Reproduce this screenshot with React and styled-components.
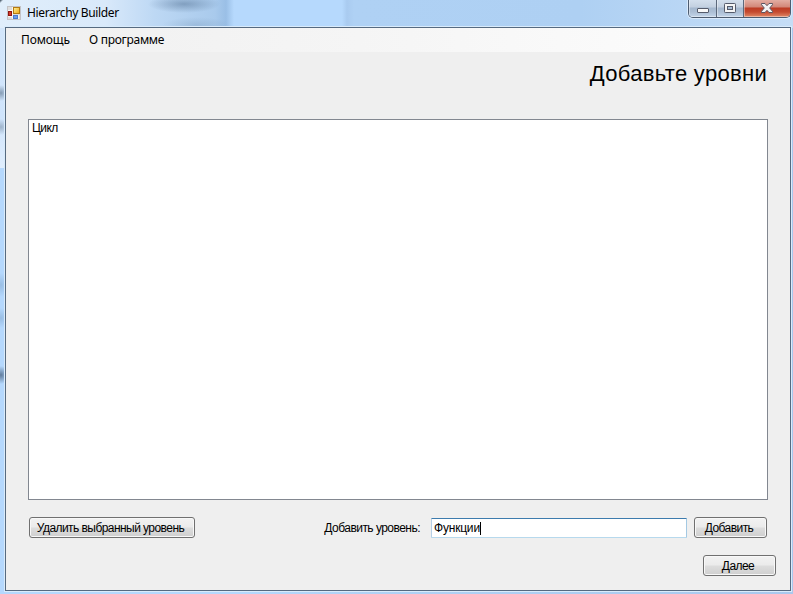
import React from "react";
import styled, { createGlobalStyle } from "styled-components";

const GlobalStyle = createGlobalStyle`
  * { box-sizing: border-box; }
  html, body { margin: 0; padding: 0; overflow: hidden; }
`;

const Window = styled.div`
  width: 793px;
  height: 594px;
  display: flex;
  flex-direction: column;
  padding: 0 2px 3px 4px;
  color: #000;
  font-family: "Liberation Sans", Arial, sans-serif;
  font-size: 12px;
  background:
    linear-gradient(135deg, #2c3a48 0, rgba(60, 75, 90, 0.5) 1.5px, transparent 2.5px) 0 0 / 6px 6px no-repeat,
    radial-gradient(ellipse 36px 9px at 184px 4px, rgba(60, 90, 125, 0.42), transparent),
    radial-gradient(ellipse 34px 8px at 196px 25px, rgba(80, 115, 150, 0.2), transparent),
    radial-gradient(ellipse 8px 8px at 1px 93px, rgba(60, 85, 110, 0.5), transparent),
    radial-gradient(ellipse 8px 8px at 1px 127px, rgba(60, 85, 110, 0.35), transparent),
    radial-gradient(ellipse 8px 12px at 1px 285px, rgba(90, 130, 170, 0.3), transparent),
    radial-gradient(ellipse 8px 10px at 1px 318px, rgba(90, 130, 170, 0.3), transparent),
    radial-gradient(ellipse 8px 9px at 1px 375px, rgba(50, 75, 105, 0.65), transparent),
    linear-gradient(#d3e6fb 0, #cfe4fc 90px, #e9f3fe 166px, transparent 168px) 0 28px / 5px 140px no-repeat,
    linear-gradient(90deg, #e0eefb 0, #d9e9fa 105px, #bdd8f4 155px, #a9caec 215px, #9abfe6 226px, #b6d9fd 234px, #b6d9fd 342px, #a9cbf0 347px, #afd1f4 354px, #aed0f3 580px, #c5ddf6 793px) 0 0 / 793px 28px no-repeat,
    linear-gradient(90deg, #b5d8fd, #b5d8fd 240px, #b0d2f5 360px, #a9c8ed);
`;

const TitleBar = styled.header`
  height: 26px;
  flex: none;
  display: flex;
  align-items: flex-start;
  justify-content: space-between;
`;

const Caption = styled.div`
  display: flex;
  align-items: center;
  gap: 6px;
  padding: 6px 0 0 3px;
  height: 20px;
`;

const Title = styled.span`
  font: 12px/14px "Noto Sans", sans-serif;
  letter-spacing: -0.36px;
  white-space: nowrap;
`;

const WindowControls = styled.div`
  display: flex;
  width: 103px;
  height: 18px;
  border: 1px solid #4d5c70;
  border-top: 0;
  border-radius: 0 0 5px 5px;
  box-shadow: 0 0 0 1px rgba(235, 245, 255, 0.65);
  overflow: hidden;
`;

const ControlButton = styled.button`
  width: ${(p) => p.$width}px;
  height: 17px;
  padding: 0;
  border: 0;
  border-left: ${(p) => (p.$first ? "0" : "1px solid #5c697c")};
  display: flex;
  align-items: flex-start;
  justify-content: center;
  background: ${(p) =>
    p.$danger
      ? "linear-gradient(#e3ada2 0, #d28778 7px, #bc3b24 8px, #c54b30 12px, #e18a68 17px)"
      : "linear-gradient(#d3dfed 0, #c3d0e0 7px, #a5b8cf 8px, #adbfd5 12px, #c3d5e9 17px)"};
  box-shadow: inset 1px -1px 0 rgba(255, 255, 255, 0.4);
`;

const Client = styled.main`
  flex: 1;
  min-height: 0;
  display: flex;
  flex-direction: column;
  border: 1px solid #566a80;
  background: #efefef;
  box-shadow: 0 0 0 1px #d9ebfb;
  margin: 1px 0 0 1px;
`;

const MenuBar = styled.nav`
  height: 24px;
  flex: none;
  display: flex;
  gap: 19px;
  padding: 4px 0 0 15px;
  background: linear-gradient(90deg, #f0f0f0, #f5f5f5 45%, #fcfcfc 90%);
`;

const MenuItem = styled.span`
  font: 12px/16px "Noto Sans", sans-serif;
  letter-spacing: ${(p) => p.$spacing}px;
  white-space: nowrap;
`;

const Heading = styled.h1`
  margin: 0;
  height: 67px;
  padding: 8px 23px 0 0;
  text-align: right;
  font-size: 22px;
  font-weight: 400;
  line-height: 28px;
  letter-spacing: 0.3px;
`;

const LevelList = styled.ul`
  margin: 0 22px;
  height: 381px;
  flex: none;
  padding: 2px 3px;
  list-style: none;
  background: #fff;
  border: 1px solid #828790;
`;

const LevelItem = styled.li`
  line-height: 13px;
  letter-spacing: -0.6px;
`;

const ActionRow = styled.div`
  display: flex;
  align-items: flex-start;
  padding: 17px 23px 0 23px;
`;

const Button = styled.button`
  width: ${(p) => p.$width}px;
  height: 21px;
  padding: 0 3px 0 0;
  flex: none;
  border: 1px solid #707070;
  border-radius: 3px;
  background: linear-gradient(#f2f2f2 0, #ebebeb 48%, #dddddd 52%, #cfcfcf 100%);
  box-shadow: inset 0 0 0 1px #f8f8f8;
  color: #000;
  font: 12px/14px "Liberation Sans", Arial, sans-serif;
  letter-spacing: -0.56px;
  white-space: nowrap;
`;

const FieldLabel = styled.label`
  margin-left: auto;
  padding: 4px 11px 0 0;
  line-height: 14px;
  letter-spacing: -0.53px;
`;

const Field = styled.div`
  width: 256px;
  height: 20px;
  margin: 1px 7px 0 0;
  padding: 2px 2px;
  display: flex;
  align-items: center;
  background: #fff;
  border: 1px solid;
  border-color: #3d7bad #a4c9e3 #b7d9ed #b5cfe7;
  border-radius: 1px;
  letter-spacing: -0.2px;
`;

const Caret = styled.i`
  width: 1px;
  height: 13px;
  background: #000;
`;

const NextRow = styled.div`
  display: flex;
  justify-content: flex-end;
  padding: 17px 14px 0 0;
`;

function AppIcon() {
  return (
    <svg width="14" height="14" viewBox="0 0 14 14" shapeRendering="crispEdges">
      <defs>
        <linearGradient id="gold" x2="1" y2="1">
          <stop stopColor="#fff2a0" />
          <stop offset="1" stopColor="#eda70c" />
        </linearGradient>
      </defs>
      <path fill="#dddcdc" stroke="#c3c3c6" d="M.5.5h13v13H.5z" />
      <path fill="none" stroke="#f8f6f2" d="M5.500 1v12M1 4.500h4M1 10.500h4M11.500 9v4" />
      <path fill="url(#gold)" stroke="#b47b12" d="M6.500 1.500h6v6h-6z" />
      <path fill="#d63a26" stroke="#8f1711" d="M1.500 5.500h3v4h-3z" />
      <path fill="#6c9fee" stroke="#4a7bd0" d="M6.500 9.500h4v3h-4z" />
    </svg>
  );
}

function MinimizeIcon() {
  return (
    <svg width="14" height="14" viewBox="0 0 14 14">
      <rect x="1.500" y="8.500" width="11" height="4" rx=".5" fill="#f8f8f8" stroke="#555b6b" />
    </svg>
  );
}

function MaximizeIcon() {
  return (
    <svg width="13" height="14" viewBox="0 0 13 14">
      <rect x=".5" y="3.500" width="11" height="9" rx=".8" fill="#f5f5f5" stroke="#555b6b" />
      <rect x="3.500" y="6.500" width="5" height="3" fill="#a9bdd5" stroke="#555b6b" />
    </svg>
  );
}

function CloseIcon() {
  return (
    <svg width="14" height="14" viewBox="0 0 14 14">
      <path
        d="M1.500 3.500h3.500L7 5.700l2-2.200h3.500v1.200L9.700 8l2.800 3.300v1.200H9L7 10.300l-2 2.200H1.500v-1.200L4.300 8 1.500 4.700z"
        fill="#f2f2f2"
        stroke="#5b5560"
        strokeLinejoin="round"
      />
    </svg>
  );
}

export default function App() {
  return (
    <>
      <GlobalStyle />
      <Window>
        <TitleBar>
          <Caption>
            <AppIcon />
            <Title>Hierarchy Builder</Title>
          </Caption>
          <WindowControls>
            <ControlButton $width={27} $first aria-label="Minimize"><MinimizeIcon /></ControlButton>
            <ControlButton $width={27} aria-label="Maximize"><MaximizeIcon /></ControlButton>
            <ControlButton $width={47} $danger aria-label="Close"><CloseIcon /></ControlButton>
          </WindowControls>
        </TitleBar>
        <Client>
          <MenuBar>
            <MenuItem $spacing={-0.1}>Помощь</MenuItem>
            <MenuItem $spacing={-0.28}>О программе</MenuItem>
          </MenuBar>
          <Heading>Добавьте уровни</Heading>
          <LevelList>
            <LevelItem>Цикл</LevelItem>
          </LevelList>
          <ActionRow>
            <Button $width={166}>Удалить выбранный уровень</Button>
            <FieldLabel>Добавить уровень:</FieldLabel>
            <Field>Функции<Caret /></Field>
            <Button $width={73}>Добавить</Button>
          </ActionRow>
          <NextRow>
            <Button $width={73}>Далее</Button>
          </NextRow>
        </Client>
      </Window>
    </>
  );
}
